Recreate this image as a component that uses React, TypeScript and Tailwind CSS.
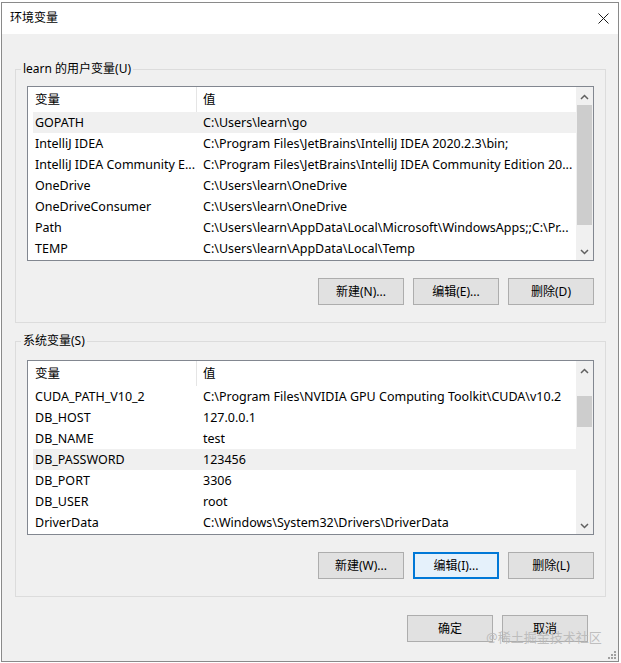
import React from "react";

type Row = [string, string];

const userVars: Row[] = [
  ["GOPATH", "C:\\Users\\learn\\go"],
  ["IntelliJ IDEA", "C:\\Program Files\\JetBrains\\IntelliJ IDEA 2020.2.3\\bin;"],
  ["IntelliJ IDEA Community E...", "C:\\Program Files\\JetBrains\\IntelliJ IDEA Community Edition 20..."],
  ["OneDrive", "C:\\Users\\learn\\OneDrive"],
  ["OneDriveConsumer", "C:\\Users\\learn\\OneDrive"],
  ["Path", "C:\\Users\\learn\\AppData\\Local\\Microsoft\\WindowsApps;;C:\\Pr..."],
  ["TEMP", "C:\\Users\\learn\\AppData\\Local\\Temp"],
];

const systemVars: Row[] = [
  ["CUDA_PATH_V10_2", "C:\\Program Files\\NVIDIA GPU Computing Toolkit\\CUDA\\v10.2"],
  ["DB_HOST", "127.0.0.1"],
  ["DB_NAME", "test"],
  ["DB_PASSWORD", "123456"],
  ["DB_PORT", "3306"],
  ["DB_USER", "root"],
  ["DriverData", "C:\\Windows\\System32\\Drivers\\DriverData"],
];

function Chevron({ up }: { up?: boolean }) {
  return (
    <svg width="9" height="6" viewBox="0 0 9 6" aria-hidden>
      <polyline
        points={up ? "1,5 4.5,1.5 8,5" : "1,1 4.5,4.5 8,1"}
        fill="none"
        stroke="#606060"
        strokeWidth="1.5"
      />
    </svg>
  );
}

function WinButton({ label, focused }: { label: string; focused?: boolean }) {
  return (
    <button
      className={
        focused
          ? "w-[86px] h-[27px] bg-[#e5f1fb] border-2 border-[#0078d7] text-[12px] text-black"
          : "w-[86px] h-[27px] bg-[#e1e1e1] border border-[#adadad] text-[12px] text-black"
      }
    >
      {label}
    </button>
  );
}

// ListView with a column header and a vertical scrollbar on the right
function VarList({
  rows,
  selected,
  thumbTop,
  thumbHeight,
}: {
  rows: Row[];
  selected: number;
  thumbTop: string;
  thumbHeight: string;
}) {
  return (
    <div className="h-[175px] border border-[#828790] bg-white flex text-[12.5px]">
      <div className="flex-1 flex flex-col overflow-hidden">
        <div className="h-[25px] flex items-center shrink-0">
          <div className="w-[169px] h-full flex items-center pl-[7px] pt-[1px] border-r border-[#e5e5e5]">变量</div>
          <div className="pl-[6px] pt-[1px]">值</div>
        </div>
        {rows.map(([name, value], i) => (
          <div
            key={name}
            className={
              i === selected
                ? "h-[21px] ml-[5px] pt-[1px] flex items-center whitespace-nowrap bg-[#f0f0f0]"
                : "h-[21px] ml-[5px] pt-[1px] flex items-center whitespace-nowrap"
            }
          >
            <div className="w-[164px] pl-[2px] overflow-hidden">{name}</div>
            <div className="pl-[6px] overflow-hidden">{value}</div>
          </div>
        ))}
      </div>
      <div className="w-[17px] bg-[#f0f0f0] flex flex-col">
        <div className="h-[17px] flex items-center justify-center pt-[2px]">
          <Chevron up />
        </div>
        <div className="flex-1 px-[1px]">
          <div className={`${thumbTop} ${thumbHeight} bg-[#cdcdcd]`} />
        </div>
        <div className="h-[17px] flex items-center justify-center">
          <Chevron />
        </div>
      </div>
    </div>
  );
}

function Group({
  label,
  className,
  children,
}: {
  label: string;
  className: string;
  children: React.ReactNode;
}) {
  return (
    <fieldset className={`w-[591px] border border-[#dcdcdc] ${className}`}>
      <legend className="ml-[5px] px-[2px] leading-[16px]">{label}</legend>
      {children}
    </fieldset>
  );
}

export default function App() {
  return (
    <div className="relative w-[621px] h-[663px] bg-white pl-[1px] pt-[2px] text-[12px] text-black font-['Noto_Sans','Noto_Sans_CJK_SC',sans-serif]">
      <div className="w-[618px] h-[660px] border border-[#8a8a8a] bg-[#f0f0f0] flex flex-col">
        {/* title bar */}
        <div className="h-[31px] bg-white flex items-center justify-between pl-[8px] pr-[9px] pb-[1px] shrink-0">
          <span>环境变量</span>
          <svg width="11" height="11" viewBox="0 0 11 11" aria-hidden>
            <path d="M0.5 0.5 L10.5 10.5 M10.5 0.5 L0.5 10.5" stroke="#1a1a1a" strokeWidth="1" />
          </svg>
        </div>

        <div className="pl-[13px] flex flex-col">
          <Group label="learn 的用户变量(U)" className="mt-[27px]">
            <div className="pt-[9px] px-[11px] pb-[17px]">
              <VarList rows={userVars} selected={0} thumbTop="mt-[1px]" thumbHeight="h-[120px]" />
              <div className="mt-[17px] flex justify-end gap-[9px]">
                <WinButton label="新建(N)..." />
                <WinButton label="编辑(E)..." />
                <WinButton label="删除(D)" />
              </div>
            </div>
          </Group>

          <Group label="系统变量(S)" className="mt-[10px]">
            <div className="pt-[11px] px-[11px] pb-[17px]">
              <VarList rows={systemVars} selected={3} thumbTop="mt-[18px]" thumbHeight="h-[31px]" />
              <div className="mt-[17px] flex justify-end gap-[9px]">
                <WinButton label="新建(W)..." />
                <WinButton label="编辑(I)..." focused />
                <WinButton label="删除(L)" />
              </div>
            </div>
          </Group>

          <div className="w-[591px] mt-[18px] pr-[18px] flex justify-end gap-[9px]">
            <WinButton label="确定" />
            <WinButton label="取消" />
          </div>
        </div>
      </div>

      {/* resize grip */}
      <svg className="absolute left-[606px] top-[650px]" width="10" height="10" viewBox="0 0 10 10" aria-hidden>
        {[
          [8, 0], [8, 3], [5, 3], [8, 6], [5, 6], [2, 6],
        ].map(([x, y]) => (
          <rect key={`${x}-${y}`} x={x} y={y + 1} width="2" height="2" fill="#a0a0a0" />
        ))}
      </svg>

      {/* watermark */}
      <div className="absolute left-[486px] top-[629px] text-[13px] leading-[16px] text-[#b8b8b8]/90 whitespace-nowrap">
        @稀土掘金技术社区
      </div>
    </div>
  );
}
